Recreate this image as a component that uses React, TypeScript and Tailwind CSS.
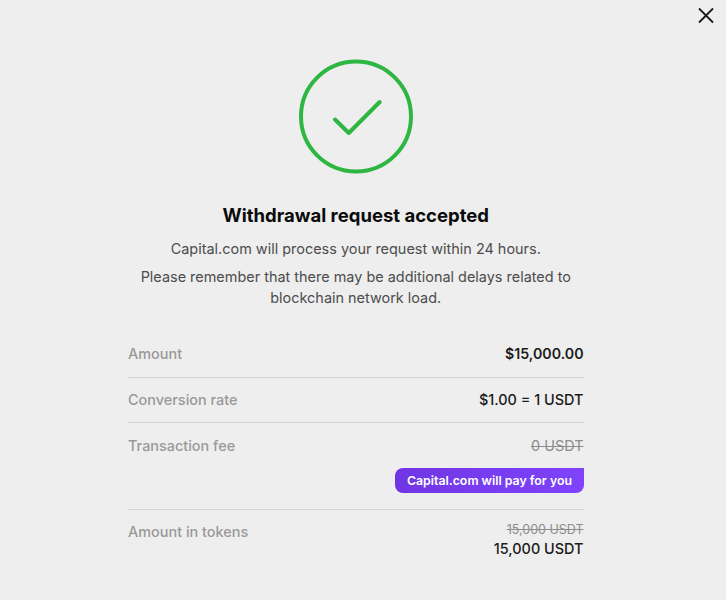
import React from 'react';

const rowClass = 'flex justify-between border-b border-[#d3d3d3]';

export default function App() {
  return (
    <div className="relative flex h-[600px] w-[726px] flex-col overflow-hidden bg-[#eeeeee] pl-32 pr-[142.5px] font-['Inter',sans-serif] text-[#1c1c1c]">
      {/* Close */}
      <button type="button" aria-label="Close" className="absolute right-3 top-[7px] h-[17px] w-4">
        <svg viewBox="0 0 16 17" className="h-[17px] w-4" fill="none" stroke="#1a1a1a" strokeWidth="1.8">
          <path d="M1 1.5 15 15.5M15 1.5 1 15.5" />
        </svg>
      </button>

      {/* Success mark */}
      <svg viewBox="0 0 116 116" className="mt-[58px] h-[116px] w-[116px] shrink-0 self-center" fill="none" stroke="#2db742" strokeWidth="4">
        <circle cx="58" cy="58.5" r="55" />
        <path d="M37 61.5 50.8 75 81.7 44" strokeLinecap="round" strokeLinejoin="round" />
      </svg>

      {/* Message */}
      <div className="mt-[29px] text-center">
        <h1 className="text-[18.5px] font-bold leading-6 text-[#0b0b0b]">Withdrawal request accepted</h1>
        <p className="mt-[12px] text-[14.45px] leading-5 text-[#4c4c4c]">Capital.com will process your request within 24 hours.</p>
        <p className="mt-2 text-[14.45px] leading-[20.5px] text-[#4c4c4c]">
          Please remember that there may be additional delays related to<br />blockchain network load.
        </p>
      </div>

      {/* Details */}
      <div className="mt-[24px] text-[14.45px] font-medium leading-5">
        <div className={`${rowClass} h-[46px] pt-3`}>
          <span className="text-[#999999]">Amount</span>
          <span className="text-[14.2px] font-semibold">$15,000.00</span>
        </div>
        <div className={`${rowClass} h-[45px] pt-3`}>
          <span className="text-[#999999]">Conversion rate</span>
          <span>$1.00 = 1 USDT</span>
        </div>
        <div className={`${rowClass} h-[87px] pt-[13px]`}>
          <span className="text-[#999999]">Transaction fee</span>
          <div className="flex flex-col items-end">
            <s className="font-normal text-[#8d8d8d]">0 USDT</s>
            <span className="mt-3 flex h-[25px] items-center rounded-l-lg rounded-br-lg bg-linear-to-r from-[#7036e4] to-[#7e43fb] px-[11.5px] text-[12.35px] font-semibold text-white">Capital.com will pay for you</span>
          </div>
        </div>
        <div className="flex justify-between pt-3">
          <span className="text-[#999999]">Amount in tokens</span>
          <div className="flex flex-col items-end">
            <s className="text-[12.5px] font-normal leading-4 text-[#8d8d8d]">15,000 USDT</s>
            <span className="mt-px">15,000 USDT</span>
          </div>
        </div>
      </div>
    </div>
  );
}
